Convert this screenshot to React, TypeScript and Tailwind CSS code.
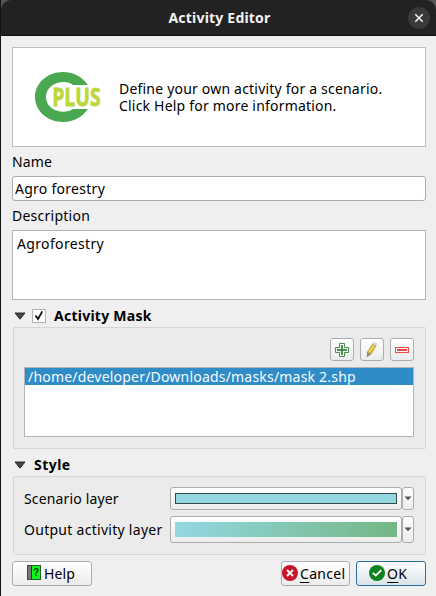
import React from "react";

const raised = "border border-[#adadad] rounded-[3px] bg-linear-to-b from-white to-[#ececec]";

function Arrow() {
  return (
    <svg width="12" height="8" viewBox="0 0 12 8" className="shrink-0">
      <path d="M1 1H11L6 7.2Z" fill="#484848" stroke="#1d1d1d" strokeWidth="0.9" />
    </svg>
  );
}

function Logo() {
  return (
    <svg width="68" height="52" viewBox="0 0 68 52" className="shrink-0 overflow-visible">
      <path d="M53 14C47 6 39 1 28 1C12.500 1 0 12 0 26S12.500 51 28 51C39 51 47 46 53 38H38C35 40 32 40.700 28.500 40.700C18 40.700 11 34 11 26S18 11 28.500 11C32 11 36 12 38 14Z" fill="#4aa850" />
      <text transform="translate(17.200 35) scale(0.775 1)" fontFamily="Open Sans, sans-serif" fontWeight="700" fontSize="25" fill="#bbd73a" stroke="#bbd73a" strokeWidth="0.8">PLUS</text>
    </svg>
  );
}

function Drop({ children, height }: { children: React.ReactNode; height: string }) {
  return (
    <div className={`flex w-[244px] ${height}`}>
      <div className={`flex w-[232px] items-center px-1 ${raised}`}>{children}</div>
      <div className={`flex w-3 items-center justify-center ${raised}`}>
        <svg width="8" height="5" viewBox="0 0 8 5" className="shrink-0">
          <path d="M0.500 0.500H7.500L4 4.300Z" fill="#555" />
        </svg>
      </div>
    </div>
  );
}

export default function App() {
  return (
    <div className="flex h-[596px] w-[436px] flex-col overflow-hidden border-l border-[#141414] bg-[#efefef] font-['Noto_Sans',sans-serif] text-[14px] leading-[17px] whitespace-nowrap text-black">
      <header className="h-9 shrink-0 bg-[#555]">
        <div className="flex h-9 items-center rounded-t-[10px] border-b border-[#101010] bg-[#222] text-[#f2f2f2]">
          <span className="w-[30px]" />
          <h1 className="flex-1 text-center font-bold tracking-[0.2px]">Activity Editor</h1>
          <span className="mr-[6px] flex h-[22px] w-[22px] items-center justify-center rounded-full bg-[#393939]">
            <svg width="10" height="10" viewBox="0 0 10 10"><path d="M1.300 1.300L8.700 8.700M8.700 1.300L1.300 8.700" stroke="#f4f4f4" strokeWidth="1.500" /></svg>
          </span>
        </div>
      </header>

      <main className="flex flex-col pt-[11px] pr-[10px] pl-[11px]">
        <section className="flex h-[100px] items-center border border-[#bfbfbf] bg-white pl-[22px]">
          <Logo />
          <p className="ml-4 tracking-[0.2px]">
            <span className="block">Define your own activity for a scenario.</span>
            <span className="block">Click Help for more information.</span>
          </p>
        </section>

        <label className="mt-[6px] h-[23px] tracking-[0.1px]">Name</label>
        <div className="flex h-[25px] items-center rounded-[3px] border border-[#adadad] bg-white pl-[2px]"><span className="tracking-[0.27px]">Agro forestry</span></div>
        <label className="mt-[6px] h-[23px] tracking-[0.25px]">Description</label>
        <div className="h-[70px] border border-[#b4b4b4] bg-white pt-1 pl-1"><span className="tracking-[0.35px]">Agroforestry</span></div>

        <div className="flex h-[27px] items-center pt-[4px] pl-[2px]">
          <Arrow />
          <span className="mr-2 ml-[6px] flex h-[14px] w-[14px] items-center justify-center border border-[#b3b3b3] bg-white">
            <svg width="10" height="11" viewBox="0 0 10 11"><path d="M1.500 5.500L4 9L8.300 1.400" fill="none" stroke="#111" strokeWidth="1.800" /></svg>
          </span>
          <span className="font-bold tracking-[0.25px]">Activity Mask</span>
        </div>
        <section className="ml-px h-[122px] rounded-[2px] border border-[#d6d6d6] bg-[#ebebeb] pt-[10px] pr-[11px] pl-[10px]">
          <div className="flex h-[23px] justify-end gap-[6px]">
            <div className={`flex w-6 items-center justify-center ${raised}`}>
              <svg width="14" height="14" viewBox="0 0 14 14" fill="none" stroke="#4d8c50"><path d="M4.500 0.500H9.500V4.500H13.500V9.500H9.500V13.500H4.500V9.500H0.500V4.500H4.500Z" fill="#f4faf4" /><path d="M7 2V12M2 7H12" strokeWidth="2" /></svg>
            </div>
            <div className={`flex w-6 items-center justify-center ${raised}`}>
              <svg width="14" height="16" viewBox="0 0 14 16"><path d="M2 10L7.500 1.500L11.500 3.500L6.500 12L2 15Z" fill="#b5a343" /><path d="M3 10L7.800 3L10 4L5.300 11Z" fill="#ecd94e" /><path d="M7.500 1L9 0L12 1.400L11.800 3.500L7.500 2.200Z" fill="#d8d8d5" /><path d="M2 10L5.800 12L1.800 15.500Z" fill="#8d8d8d" /></svg>
            </div>
            <div className={`flex w-6 items-center justify-center ${raised}`}>
              <svg width="14" height="6" viewBox="0 0 14 6"><rect x="0.500" y="0.500" width="13" height="5" fill="#fff" stroke="#ed4b4b" /><path d="M2 3H12" stroke="#f34343" strokeWidth="2" /></svg>
            </div>
          </div>
          <div className="mt-[6px] h-[70px] border border-[#b4b4b4] bg-white">
            <div className="h-[17px] bg-[#308cc6] pl-[3px] text-[#f5fbff]"><span className="tracking-[0.2px]">/home/developer/Downloads/masks/mask 2.shp</span></div>
          </div>
        </section>

        <div className="flex h-[27px] items-center pt-[4px] pl-[2px]">
          <Arrow />
          <span className="ml-2 font-bold tracking-[0.45px]">Style</span>
        </div>
        <section className="ml-px flex h-[79px] flex-col gap-[6px] rounded-[2px] border border-[#d6d6d6] bg-[#ebebeb] pt-[10px] pr-[11px] pl-[10px]">
          <div className="flex items-center justify-between">
            <span className="tracking-[0.15px]">Scenario layer</span>
            <Drop height="h-[23px]"><div className="h-[11px] w-full border border-[#35484a] bg-[#93d8e1]" /></Drop>
          </div>
          <div className="flex items-center justify-between">
            <span className="tracking-[0.28px]">Output activity layer</span>
            <Drop height="h-[27px]"><div className="h-[15px] w-full bg-linear-to-r from-[#93d8e1] to-[#74b785]" /></Drop>
          </div>
        </section>

        <footer className="mt-[6px] flex h-[25px]">
          <button className={`flex w-20 items-center pl-[14px] ${raised}`}>
            <svg width="14" height="15" viewBox="0 0 14 15" className="mr-[3px] mb-[2px] shrink-0"><rect x="0.500" y="0.500" width="13" height="14" fill="#0df51b" stroke="#295a2b" /><path d="M1 1H4V14H1Z" fill="#777" /><path d="M4.500 1V14" stroke="#333" /><text x="6" y="11" fontSize="10" fontWeight="700" fontFamily="Liberation Sans" fill="#073b0a">?</text></svg>
            <span className="tracking-[0.15px]">Help</span>
          </button>
          <button className={`ml-auto flex w-[69px] items-center ${raised}`}>
            <svg width="16" height="16" viewBox="0 0 16 16" className="mr-[2px] mb-[2px] shrink-0"><circle cx="8" cy="8" r="8" fill="#c7162b" /><path d="M5 5L11 11M11 5L5 11" stroke="white" strokeWidth="1.800" /></svg>
            <span className="tracking-[0.28px]"><u className="underline-offset-[3px]">C</u>ancel</span>
          </button>
          <button className="ml-[6px] flex w-[70px] items-center rounded-[3px] border border-[#2b6f9e] bg-linear-to-b from-white to-[#dae3e8] pl-3">
            <svg width="16" height="16" viewBox="0 0 16 16" className="mr-[2px] mb-[2px] shrink-0"><circle cx="8" cy="8" r="8" fill="#0e8420" /><path d="M3.800 7.800L6.800 10.500L12.300 5.200" fill="none" stroke="white" strokeWidth="1.800" /></svg>
            <span className="tracking-[0.4px]"><u className="underline-offset-[3px]">O</u>K</span>
          </button>
        </footer>
      </main>
    </div>
  );
}
